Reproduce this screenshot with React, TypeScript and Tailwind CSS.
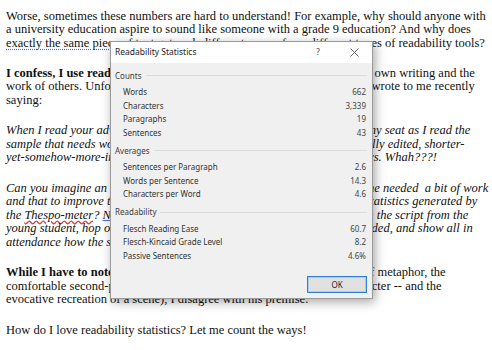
import React from 'react';

function Line({ children }: { children: React.ReactNode }) {
  return <div className="whitespace-nowrap h-[13.6px] leading-[13.6px]">{children}</div>;
}

function Para({ children, italic }: { children: React.ReactNode; italic?: boolean }) {
  return <div className={italic ? 'italic mb-[16.6px]' : 'mb-[16.6px]'}>{children}</div>;
}

type Row = [string, string];

function Section({ title, rows }: { title: string; rows: Row[] }) {
  return (
    <div>
      <div className="flex items-center h-[13px]">
        <span className="text-[#3c3c3c]">{title}</span>
        <div className="flex-1 h-px bg-[#dcdcdc] ml-[4px]"></div>
      </div>
      <div className="pt-[3.25px]">
        {rows.map(([label, value]) => (
          <div key={label} className="flex justify-between items-center h-[13.5px] pl-[8px] pr-[1px]">
            <span className="text-[#333]">{label}</span>
            <span className="text-[#444]">{value}</span>
          </div>
        ))}
      </div>
    </div>
  );
}

export default function App() {
  return (
    <div className="relative w-[492px] h-[350px] overflow-hidden bg-white">
      {/* document behind the dialog */}
      <div className="pt-[9.5px] pl-[6px] text-[12.5px] text-[#111] font-['Liberation_Serif','Times_New_Roman',serif]">
        <Para>
          <Line>Worse, sometimes these numbers are hard to understand! For example, why should anyone with</Line>
          <Line>a university education aspire to sound like someone with a grade 9 education? And why does</Line>
          <Line>
            <span className="underline decoration-dotted decoration-[#5a7bd0] underline-offset-2">exactly the same piece</span> of text get such different scores from different types of readability tools?
          </Line>
        </Para>
        <Para>
          <Line>
            <b>I confess, I use readability statistics.</b> I often use them to gauge both my own writing and the
          </Line>
          <Line>work of others. Unfortunately, a younger reader, who disagrees with me, wrote to me recently</Line>
          <Line>saying:</Line>
        </Para>
        <Para italic>
          <Line>When I read your advice columns last Tuesday, I almost fell right out of my seat as I read the</Line>
          <Line>sample that needs work, compared with the examples of your professionally edited, shorter-</Line>
          <Line>yet-somehow-more-incomprehensible version that has way better statistics. Whah???!</Line>
        </Para>
        <Para italic>
          <Line>Can you imagine an old-timey theatre director telling Shakespeare, that he needed&nbsp; a bit of work</Line>
          <Line>and that to improve the play he should then try to match the readability statistics generated by</Line>
          <Line>
            the <span className="underline decoration-wavy decoration-[#d04040]">Thespo-meter</span>?{' '}
            <span className="underline decoration-[#4a6fd0]">No</span>, the wise old director would simply have just taken the script from the
          </Line>
          <Line>young student, hop onto the stage, and perform it, just as it had been handed, and show all in</Line>
          <Line>attendance how the scene should be played.</Line>
        </Para>
        <Para>
          <Line>
            <b>While I have to note that</b> the younger letter writer made excellent use of metaphor, the
          </Line>
          <Line>comfortable second-person point of view and a very dramatic main character -- and the</Line>
          <Line>evocative recreation of a scene), I disagree with his premise.</Line>
        </Para>
        <Para>
          <Line>How do I love readability statistics? Let me count the ways!</Line>
        </Para>
      </div>

      {/* Readability Statistics dialog */}
      <div className="absolute left-[110px] top-[41px] w-[263px] h-[258px] border border-[#9a9a9a] bg-[#f0f0f0] shadow-[2px_3px_10px_rgba(0,0,0,0.35)] flex flex-col font-['Noto_Sans','Open_Sans',sans-serif] text-[8px]">
        <div className="h-[21px] bg-white flex items-center pl-[4px] pr-[4px] shrink-0">
          <span className="flex-1 text-[8.5px] text-[#1a1a1a]">Readability Statistics</span>
          <span className="w-[20px] text-center text-[8.5px] text-[#555]">?</span>
          <div className="w-[28px] ml-[12px] flex justify-center">
            <svg width="9" height="9" viewBox="0 0 9 9">
              <path d="M0.5 0.5 L8.5 8.5 M8.5 0.5 L0.5 8.5" stroke="#555" strokeWidth="0.9" fill="none" />
            </svg>
          </div>
        </div>
        <div className="flex-1 flex flex-col pt-[6px] pl-[4px] pr-[5px] pb-[5px]">
          <div className="flex flex-col gap-[4.75px]">
            <Section
              title="Counts"
              rows={[
                ['Words', '662'],
                ['Characters', '3,339'],
                ['Paragraphs', '19'],
                ['Sentences', '43'],
              ]}
            />
            <Section
              title="Averages"
              rows={[
                ['Sentences per Paragraph', '2.6'],
                ['Words per Sentence', '14.3'],
                ['Characters per Word', '4.6'],
              ]}
            />
            <Section
              title="Readability"
              rows={[
                ['Flesch Reading Ease', '60.7'],
                ['Flesch-Kincaid Grade Level', '8.2'],
                ['Passive Sentences', '4.6%'],
              ]}
            />
          </div>
          <div className="mt-auto flex justify-end">
            <div className="w-[60px] h-[17px] border border-[#2f7fd2] bg-[#e1e1e1] shadow-[inset_0_0_0_1px_#a9cdef] flex items-center justify-center text-[#222]">
              OK
            </div>
          </div>
        </div>
      </div>
    </div>
  );
}
